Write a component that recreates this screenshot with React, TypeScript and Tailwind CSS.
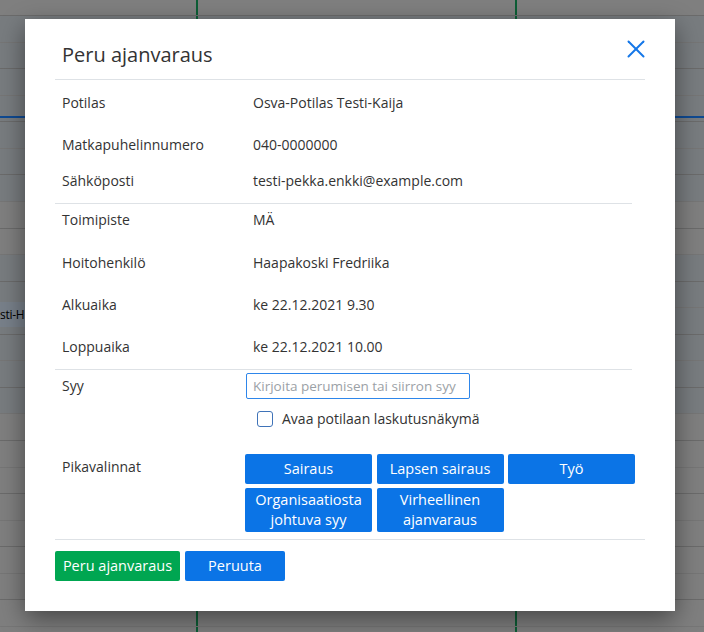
import { X } from "lucide-react";

const tones: ("blue" | "gray")[] = [];
for (let i = 0; i < 25; i++) {
  if (i === 0) tones.push("gray");
  else if (i <= 7) tones.push("blue");
  else if (i <= 9) tones.push("gray");
  else if (i <= 15) tones.push("blue");
  else tones.push("gray");
}

function CalRow({ idx }: { idx: number }) {
  const tone = tones[idx];
  const bg = tone === "blue" ? "bg-[#787c7f]" : "bg-[#7f7f7f]";
  const line = idx % 2 === 0 ? "border-[#6b6b6b]" : "border-[#767676]";
  const h = idx === 0 ? "h-[16px]" : "h-[26.57px]";
  return (
    <div className={`flex shrink-0 border-b ${line} ${h} ${bg}`}>
      <div className="w-[196px]" />
      <div className="w-[319px] border-l-2 border-[#0d5e36]" />
      <div className="flex-1 border-l-2 border-[#0d5e36]" />
    </div>
  );
}

function InfoRow({ label, value, className = "" }: { label: string; value: string; className?: string }) {
  return (
    <div className={`flex leading-[22px] ${className}`}>
      <div className="w-[191px] pl-[7px]">{label}</div>
      <div className="pl-[7px]">{value}</div>
    </div>
  );
}

function QuickBtn({ children, tall = false }: { children: React.ReactNode; tall?: boolean }) {
  return (
    <button
      className={`w-[127px] rounded-[2px] bg-[#0b74e6] text-white text-[14.5px] leading-[20px] ${tall ? "h-[44px]" : "h-[30px]"}`}
    >
      {children}
    </button>
  );
}

export default function App() {
  return (
    <div className="relative w-[704px] h-[632px] overflow-hidden bg-[#7f7f7f] font-['Open_Sans',sans-serif]">
      <div className="flex flex-col">
        {tones.map((_, i) => (
          <CalRow key={i} idx={i} />
        ))}
      </div>
      <div className="absolute left-0 right-0 top-[116px] h-[2px] bg-[#0f4a92]" />
      <div className="absolute left-0 top-[302px] w-[25px] h-[25px] bg-[#78808a] text-[12px] tracking-[-0.3px] leading-[25px] text-black whitespace-nowrap">
        sti-H
      </div>

      <div className="absolute left-[25px] top-[19px] w-[650px] h-[592px] bg-white shadow-[0_8px_24px_rgba(0,0,0,0.45)] px-[30px] text-[#333] text-[14px]">
        <div className="relative pt-[22px] pb-[10px] pl-[7px] border-b border-[#dee2e6]">
          <h2 className="text-[20px] leading-[28px] text-[#333]">Peru ajanvaraus</h2>
          <X size={30} strokeWidth={1.6} className="absolute right-[-6px] top-[15px] text-[#1577e8]" />
        </div>

        <div className="pt-[12px] pb-[11px] mr-[13px] border-b border-[#dee2e6]">
          <InfoRow label="Potilas" value="Osva-Potilas Testi-Kaija" />
          <InfoRow className="mt-[20px]" label="Matkapuhelinnumero" value="040-0000000" />
          <InfoRow className="mt-[14px]" label="Sähköposti" value="testi-pekka.enkki@example.com" />
        </div>

        <div className="pt-[5px] pb-[11px] mr-[13px] border-b border-[#dee2e6]">
          <InfoRow label="Toimipiste" value="MÄ" />
          <InfoRow className="mt-[21px]" label="Hoitohenkilö" value="Haapakoski Fredriika" />
          <InfoRow className="mt-[20px]" label="Alkuaika" value="ke 22.12.2021 9.30" />
          <InfoRow className="mt-[20px]" label="Loppuaika" value="ke 22.12.2021 10.00" />
        </div>

        <div className="pt-[3px] pb-[7px] border-b border-[#dee2e6]">
          <div className="flex items-center">
            <div className="w-[191px] pl-[7px] leading-[22px]">Syy</div>
            <input
              className="w-[224px] h-[26px] border border-[#2e86ea] rounded-[2px] px-[6px] text-[13.5px] outline-none placeholder:text-[#9ba1a6]"
              placeholder="Kirjoita perumisen tai siirron syy"
            />
          </div>
          <div className="flex items-center mt-[9px] ml-[202px] h-[22px]">
            <div className="w-[16px] h-[16px] rounded-[3px] border border-[#3f73b8] bg-white" />
            <span className="ml-[9px] leading-[22px]">Avaa potilaan laskutusnäkymä</span>
          </div>
          <div className="flex mt-[24px]">
            <div className="w-[191px] pl-[7px] pt-[2px] leading-[22px]">Pikavalinnat</div>
            <div className="-ml-[1px] grid grid-cols-[127px_127px_127px] gap-x-[4.5px] gap-y-[4px]">
              <QuickBtn>Sairaus</QuickBtn>
              <QuickBtn>Lapsen sairaus</QuickBtn>
              <QuickBtn>Työ</QuickBtn>
              <QuickBtn tall>
                Organisaatiosta
                <br />
                johtuva syy
              </QuickBtn>
              <QuickBtn tall>
                Virheellinen
                <br />
                ajanvaraus
              </QuickBtn>
            </div>
          </div>
        </div>

        <div className="pt-[11px] flex gap-[5px]">
          <button className="w-[125px] h-[30px] rounded-[2px] bg-[#00a651] text-white text-[14.5px]">Peru ajanvaraus</button>
          <button className="w-[100px] h-[30px] rounded-[2px] bg-[#0b74e6] text-white text-[14.5px]">Peruuta</button>
        </div>
      </div>
    </div>
  );
}
